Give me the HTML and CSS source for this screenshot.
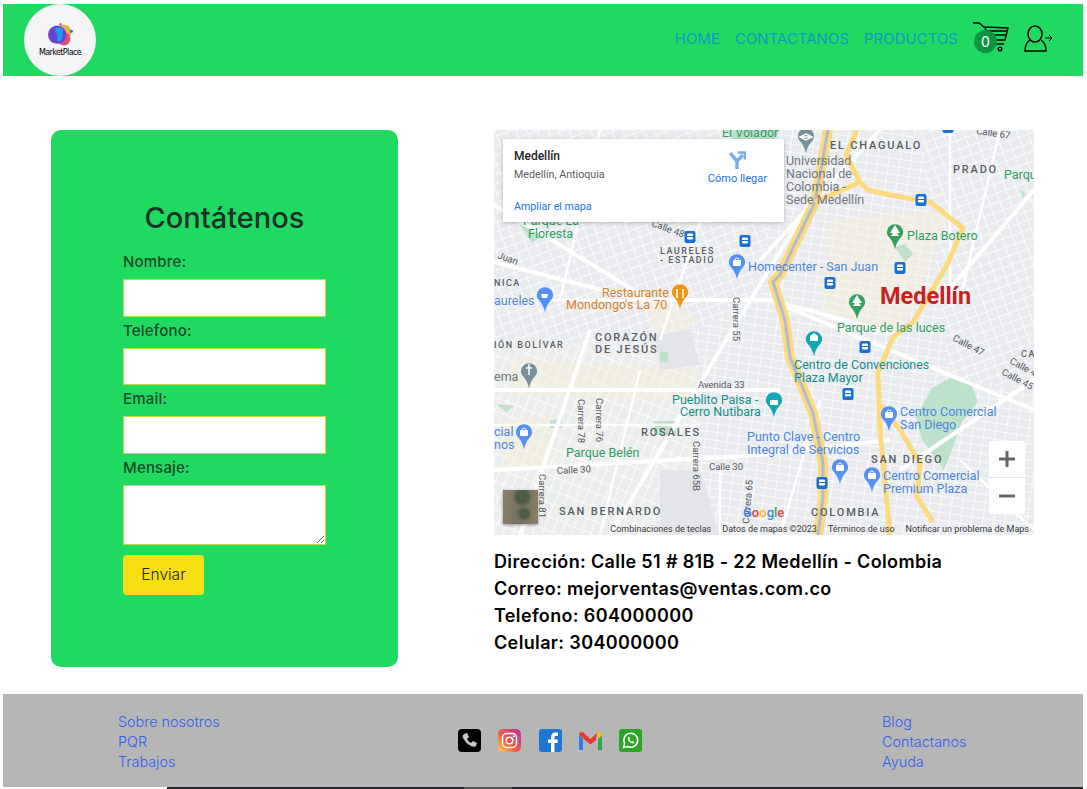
FILE: index.html
```html
<!DOCTYPE html>
<html lang="es">
<head>
	<meta charset="utf-8">
	<title>Contactenos</title>
	<link rel="stylesheet" href="styles.css">
</head>
<body>
	<header class="topbar">
		<a class="logo" href="#">
			<svg width="25" height="25" viewBox="0 0 30 30">
				<circle cx="19" cy="11" r="9" fill="#e8b14c"/>
				<circle cx="19" cy="19" r="8" fill="#d9527f"/>
				<circle cx="11" cy="14" r="11" fill="#6b3fd0"/>
				<path d="M9 6c3-2 5 0 6 0 1 0 3-1 3 3l-1 10c-1 3-3 4-5 3-2-1-1-6-1-9-2-1-3-5-2-7z" fill="#1b9be8"/>
				<circle cx="15" cy="1.500" r="1.500" fill="#d9527f"/>
				<circle cx="28" cy="10" r="1.800" fill="#3a6ea8"/>
			</svg>
			<span class="logo-text">MarketPlace</span>
		</a>
		<nav class="mainnav">
			<a href="#">HOME</a>
			<a href="#">CONTACTANOS</a>
			<a href="#">PRODUCTOS</a>
		</nav>
		<a class="cart" href="#">
			<svg width="37" height="31" viewBox="0 0 37 31" fill="none" stroke="#000" stroke-width="1.400">
				<path d="M0 1h6l5 4 24 1-3 12H15"/>
				<path d="M12 6l5 12M34 9H12M33 13H14"/>
				<path d="M17 22h14"/>
				<circle cx="27" cy="27" r="1.800"/>
			</svg>
			<span class="badge">0</span>
		</a>
		<a class="user" href="#">
			<svg width="30" height="28" viewBox="0 0 30 28" fill="none" stroke="#000" stroke-width="1.500">
				<ellipse cx="11" cy="9" rx="7" ry="8"/>
				<path d="M6 15c-3 2-5 5-5 11h21c0-6-2-9-5-11"/>
				<path d="M21 13h7M25 10l3 3-3 3" stroke-width="1"/>
			</svg>
		</a>
	</header>

	<main class="content">
		<section class="card">
			<h2>Contátenos</h2>
			<form class="form">
				<label for="nombre">Nombre:</label>
				<input id="nombre" type="text">
				<label for="telefono">Telefono:</label>
				<input id="telefono" type="text">
				<label for="email">Email:</label>
				<input id="email" type="text">
				<label for="mensaje">Mensaje:</label>
				<textarea id="mensaje"></textarea>
				<button type="button">Enviar</button>
			</form>
		</section>

		<section class="info">
			<div class="map">
				<svg class="map-canvas" width="540" height="405" viewBox="494 130 540 405">
					<defs>
						<pattern id="blocksA" width="11" height="8" patternUnits="userSpaceOnUse" patternTransform="rotate(8)">
							<rect width="11" height="8" fill="#e9ebee"/>
							<path d="M0 0h11M0 0v8" stroke="#fff" stroke-width="1.500"/>
						</pattern>
						<pattern id="blocksB" width="10" height="9" patternUnits="userSpaceOnUse" patternTransform="rotate(-20)">
							<rect width="10" height="9" fill="#e9ebee"/>
							<path d="M0 0h10M0 0v9" stroke="#fff" stroke-width="1.500"/>
						</pattern>
						<pattern id="blocksC" width="9" height="13" patternUnits="userSpaceOnUse" patternTransform="rotate(22)">
							<rect width="9" height="13" fill="#eceded"/>
							<path d="M0 0h9M0 0v13" stroke="#fff" stroke-width="1.500"/>
						</pattern>
						<g id="pin">
							<path d="M0 14C-3-1-11-2-11-9a11 11 0 0 1 22 0c0 7-8 8-11 23z" transform="scale(.74)"/>
						</g>
						<g id="metro">
							<rect x="-5.500" y="-6" width="11" height="12" rx="2" fill="#1a6fd4"/>
							<rect x="-3" y="-3.500" width="6" height="6" rx="1" fill="#fff"/>
							<path d="M-3 -.5h6" stroke="#1a6fd4"/>
						</g>
						<g id="bag">
							<rect x="-4" y="-9" width="8" height="6" rx="1" fill="#fff"/>
							<path d="M-2-9a2 2 0 0 1 4 0" stroke="#fff" fill="none"/>
						</g>
					</defs>

					<rect x="494" y="130" width="540" height="405" fill="url(#blocksA)"/>
					<polygon points="494,130 780,130 760,300 650,350 494,340" fill="url(#blocksB)"/>
					<polygon points="494,340 700,350 700,535 494,535" fill="url(#blocksC)"/>
					<polygon points="920,130 1034,130 1034,390 950,380" fill="url(#blocksB)"/>
					<polygon points="830,220 950,210 900,340 820,310" fill="#f7f0d4" opacity=".4"/>
					<polygon points="510,360 700,370 690,400 510,395" fill="#f7f0d4" opacity=".45"/>
					<polygon points="640,290 700,320 660,345" fill="#f7f0d4" opacity=".4"/>
					<polygon points="500,420 560,415 550,470 505,470" fill="#f7f0d4" opacity=".45"/>
					<polygon points="660,470 700,470 720,535 660,535" fill="#e3e5e8"/>
					<polygon points="655,335 690,330 700,365 660,370" fill="#e3e5e8"/>

					<path class="park" d="M932 388l18-10 22 8 6 16-16 20-8 22-10 26-22-30-6-24z"/>
					<path class="park" d="M654 421h22v14h-22zM496 404l18 2-8 6zM550 420h12v8h-12zM660 352h8v10h-8z"/>
					<path class="park" d="M520 225l24 10-12 8z"/>
					<path class="park" d="M725 130h55l-6 10h-40zM895 247l10-3 8 10-8 8zM1020 190l6 3-3 5z"/>

					<path class="street" d="M494 262L640 300 770 300 900 335M494 390H780M494 470L760 455 890 440M610 535L720 350 830 170M590 330L520 535M770 300L1034 410M880 130L760 260M940 300L1034 190M494 205L650 300M900 470L1034 380"/>
					<path class="street-thin" d="M494 300H770M494 425H700M600 130L560 300M700 222L660 340M640 370L600 535M950 130V300M1000 130L960 300M820 400L780 535M720 470V535M960 460L1034 530"/>

					<path class="river" d="M828 130L815 202 780 275 773 282 785 320 790 357 813 413 823 463 823 497 818 535"/>
					<path class="highway" d="M828 130L815 202 780 275 773 282 785 320 790 357 813 413 823 463 823 497 818 535"/>
					<path class="highway-in" d="M857 130L846 155 860 182 868 190 890 195 930 202 963 228 947 265 913 322 893 337 878 373 880 430 890 535"/>
					<path class="highway-in" d="M880 405L900 430 920 463 917 497 933 522"/>
					<path class="highway-in" d="M815 202L860 182"/>

					<text class="t-green" x="722" y="137">El Volador</text>
					<text class="t-green" x="523" y="225">Parque La</text>
					<text class="t-green" x="528" y="238">Floresta</text>
					<text class="t-street" transform="translate(651 226) rotate(20)">Calle 48</text>
					<text class="t-street" transform="translate(497 258) rotate(20)">Juan</text>
					<text class="t-area-s" x="660" y="254">LAURELES</text>
					<text class="t-area-s" x="660" y="263">- ESTADIO</text>
					<text class="t-area-s" x="494" y="286">NICA</text>
					<text class="t-blue" x="494" y="305">aureles</text>
					<text class="t-orange" x="602" y="297">Restaurante</text>
					<text class="t-orange" x="566" y="309">Mondongo's La 70</text>
					<text class="t-street" transform="translate(733 297) rotate(90)">Carrera 55</text>
					<text class="t-blue" x="748" y="271">Homecenter - San Juan</text>
					<text class="t-area" x="830" y="149">EL CHAGUALO</text>
					<text class="t-grey" x="786" y="165">Universidad</text>
					<text class="t-grey" x="786" y="178">Nacional de</text>
					<text class="t-grey" x="786" y="191">Colombia -</text>
					<text class="t-grey" x="786" y="204">Sede Medellín</text>
					<text class="t-area" x="953" y="173">PRADO</text>
					<text class="t-green" x="1004" y="179">Parque</text>
					<text class="t-street" transform="translate(976 134) rotate(8)">Calle 67</text>
					<text class="t-green" x="907" y="240">Plaza Botero</text>
					<text class="t-city" x="880" y="304">Medellín</text>
					<text class="t-green" x="837" y="332">Parque de las luces</text>
					<text class="t-area" x="595" y="341">CORAZÓN</text>
					<text class="t-area" x="595" y="353">DE JESÚS</text>
					<text class="t-area-s" x="494" y="348">IÓN BOLÍVAR</text>
					<text class="t-grey" x="494" y="381">ema</text>
					<text class="t-street" x="698" y="388">Avenida 33</text>
					<text class="t-teal" x="672" y="404">Pueblito Paisa -</text>
					<text class="t-teal" x="680" y="416">Cerro Nutibara</text>
					<text class="t-street" transform="translate(578 399) rotate(90)">Carrera 78</text>
					<text class="t-street" transform="translate(596 398) rotate(90)">Carrera 76</text>
					<text class="t-blue" x="494" y="436">cial</text>
					<text class="t-blue" x="494" y="449">nos</text>
					<text class="t-green" x="566" y="457">Parque Belén</text>
					<text class="t-area" x="641" y="436">ROSALES</text>
					<text class="t-street" transform="translate(693 441) rotate(90)">Carrera 65B</text>
					<text class="t-street" x="709" y="470">Calle 30</text>
					<text class="t-street" transform="translate(557 474) rotate(-3)">Calle 30</text>
					<text class="t-street" transform="translate(539 474) rotate(90)">Carrera 81</text>
					<text class="t-area" x="559" y="515">SAN BERNARDO</text>
					<text class="t-street" transform="translate(749 524) rotate(-85)">Carrera 65</text>
					<text class="t-blue" x="747" y="441">Punto Clave - Centro</text>
					<text class="t-blue" x="747" y="454">Integral de Servicios</text>
					<text class="t-teal" x="794" y="369">Centro de Convenciones</text>
					<text class="t-teal" x="794" y="382">Plaza Mayor</text>
					<text class="t-street" transform="translate(952 340) rotate(28)">Calle 47</text>
					<text class="t-street" transform="translate(1009 363) rotate(28)">Calle 4</text>
					<text class="t-street" transform="translate(1001 374) rotate(28)">Calle 45</text>
					<text class="t-area-s" x="1021" y="357">CA</text>
					<text class="t-blue" x="900" y="416">Centro Comercial</text>
					<text class="t-blue" x="900" y="429">San Diego</text>
					<text class="t-area" x="871" y="463">SAN DIEGO</text>
					<text class="t-blue" x="883" y="480">Centro Comercial</text>
					<text class="t-blue" x="883" y="493">Premium Plaza</text>
					<text class="t-area" x="811" y="516">COLOMBIA</text>
					<text class="t-google" x="743" y="517"><tspan fill="#4285f4">G</tspan><tspan fill="#ea4335">o</tspan><tspan fill="#fbbc05">o</tspan><tspan fill="#4285f4">g</tspan><tspan fill="#34a853">l</tspan><tspan fill="#ea4335">e</tspan></text>

					<use href="#pin" x="806" y="143" fill="#78909c"/>
					<use href="#pin" x="529" y="378" fill="#78909c"/>
					<use href="#pin" x="545" y="302" fill="#5491f5"/>
					<use href="#pin" x="680" y="299" fill="#ef9714"/>
					<use href="#pin" x="737" y="269" fill="#5491f5"/>
					<use href="#pin" x="895" y="239" fill="#34a05c"/>
					<use href="#pin" x="857" y="309" fill="#34a05c"/>
					<use href="#pin" x="814" y="346" fill="#12a5b4"/>
					<use href="#pin" x="774" y="407" fill="#12a5b4"/>
					<use href="#pin" x="524" y="439" fill="#5491f5"/>
					<use href="#pin" x="889" y="421" fill="#5491f5"/>
					<use href="#pin" x="840" y="474" fill="#5491f5"/>
					<use href="#pin" x="872" y="482" fill="#5491f5"/>
					<use href="#bag" x="737" y="269"/>
					<use href="#bag" x="524" y="439"/>
					<use href="#bag" x="889" y="421"/>
					<use href="#bag" x="840" y="474"/>
					<use href="#bag" x="872" y="482"/>
					<path d="M541 294h7l-1 4h-5zM890 233l5-8 5 8h-3l2 3h-8l2-3zM852 303l5-8 5 8h-3l2 3h-8l2-3z" fill="#fff"/>
					<path d="M677 289v9M683 289v9M526 368h6M529 364v11M801 137h10M806 134l6 3-6 3-6-3z" stroke="#fff" stroke-width="1.500" fill="none"/>
					<path d="M770 400h8v5h-8zM810 336l4-3 4 3v5h-8z" fill="#fff"/>

					<use href="#metro" x="690" y="237"/>
					<use href="#metro" x="745" y="241"/>
					<use href="#metro" x="921" y="200"/>
					<use href="#metro" x="900" y="268"/>
					<use href="#metro" x="830" y="283"/>
					<use href="#metro" x="865" y="347"/>
					<use href="#metro" x="848" y="394"/>
					<use href="#metro" x="822" y="483"/>
					<use href="#metro" x="948" y="127"/>
				</svg>

				<div class="place-card">
					<div class="place-text">
						<strong>Medellín</strong>
						<span>Medellín, Antioquia</span>
						<a href="#">Ampliar el mapa</a>
					</div>
					<a class="directions" href="#">
						<svg width="18" height="18" viewBox="0 0 18 18" fill="none" stroke="#7baee8" stroke-width="3.500">
							<path d="M9 18V10L2 2M9 10l6-6"/>
							<path d="M10 1.500h7v7" stroke-width="2.500"/>
						</svg>
						Cómo llegar
					</a>
				</div>

				<div class="satellite"></div>

				<div class="zoom-ctl">
					<span class="zoom-btn">
						<svg width="16" height="16" viewBox="0 0 16 16"><path d="M8 0v16M0 8h16" stroke="#666" stroke-width="3"/></svg>
					</span>
					<span class="zoom-btn">
						<svg width="16" height="16" viewBox="0 0 16 16"><path d="M0 8h16" stroke="#666" stroke-width="3"/></svg>
					</span>
				</div>

				<div class="attrib">
					<span>Combinaciones de teclas</span>
					<span>Datos de mapas ©2023</span>
					<span>Términos de uso</span>
					<span>Notificar un problema de Maps</span>
				</div>
			</div>

			<p class="address">Dirección: Calle 51 # 81B - 22 Medellín - Colombia<br>Correo: mejorventas@ventas.com.co<br>Telefono: 604000000<br>Celular: 304000000</p>
		</section>
	</main>

	<footer class="footer">
		<ul class="footer-links">
			<li><a href="#">Sobre nosotros</a></li>
			<li><a href="#">PQR</a></li>
			<li><a href="#">Trabajos</a></li>
		</ul>
		<div class="social">
			<svg width="23" height="23" viewBox="0 0 23 23">
				<rect width="23" height="23" rx="4" fill="#000"/>
				<path d="M6 5l3-1 2 4-2 2c1 2 2 3 4 4l2-2 4 2-1 3c-1 1-3 1-5 0-4-2-6-5-8-8-1-2 0-3 1-4z" fill="#c9c9c9"/>
			</svg>
			<svg width="23" height="23" viewBox="0 0 23 23">
				<defs>
					<linearGradient id="insta" x1="0" y1="1" x2="1" y2="0">
						<stop offset="0" stop-color="#fcd95a"/>
						<stop offset=".4" stop-color="#f56040"/>
						<stop offset="1" stop-color="#b92fa8"/>
					</linearGradient>
				</defs>
				<rect width="23" height="23" rx="5" fill="url(#insta)"/>
				<rect x="4.500" y="4.500" width="14" height="14" rx="4" fill="none" stroke="#fff" stroke-width="1.500"/>
				<circle cx="11.500" cy="11.500" r="3.300" fill="none" stroke="#fff" stroke-width="1.500"/>
				<circle cx="15.800" cy="7.200" r="1" fill="#fff"/>
			</svg>
			<svg width="23" height="23" viewBox="0 0 23 23">
				<rect width="23" height="23" rx="3" fill="#1f76d2"/>
				<path d="M12 23v-9H9v-3.500h3V8c0-3 2-4.500 4-4.500h3V7h-2c-1 0-1.500.5-1.500 1.500v2h3.500l-.5 3.500h-3v9z" fill="#fff"/>
			</svg>
			<svg width="23" height="23" viewBox="0 0 23 23">
				<path d="M0 6v15h4V10z" fill="#2a7ee8"/>
				<path d="M19 10v11h4V6z" fill="#2fa84f"/>
				<path d="M0 6c0-3 3-4 5-2l6.500 6 6.500-6-1 7-5.500 4.500L0 6z" fill="#e8392e"/>
				<path d="M18 4c2-2 5-1 5 2l-4 4z" fill="#f6bf1e"/>
			</svg>
			<svg width="23" height="23" viewBox="0 0 23 23">
				<rect width="23" height="23" rx="3" fill="#2aa526"/>
				<path d="M4.500 18.500l1-4a7 7 0 1 1 3 3z" fill="none" stroke="#fff" stroke-width="1.500"/>
				<path d="M9 8l1-.5 1 2-.7 1c.5 1 1.200 1.700 2.200 2.200l1-.7 2 1-.5 1c-1 .7-2.500.5-4-.7-1.500-1.200-2.500-3-2-5z" fill="#fff"/>
			</svg>
		</div>
		<ul class="footer-links right">
			<li><a href="#">Blog</a></li>
			<li><a href="#">Contactanos</a></li>
			<li><a href="#">Ayuda</a></li>
		</ul>
	</footer>
	<div class="strip"></div>
</body>
</html>
```

FILE: styles.css
```css
html, body {
	height: 789px;
	overflow: hidden;
}
body {
	margin: 0;
	padding: 4px 4px 0 3px;
	box-sizing: border-box;
	background: #fff;
	color: #000;
	font-family: Inter, "Open Sans", sans-serif;
}
a {
	text-decoration: none;
}

.topbar {
	display: flex;
	align-items: center;
	height: 72px;
	padding-left: 21px;
	background: #20d961;
}
.logo {
	display: flex;
	flex-direction: column;
	align-items: center;
	justify-content: center;
	width: 72px;
	height: 72px;
	border-radius: 50%;
	background: #f5f5f7;
}
.logo svg {
	margin-bottom: -1px;
}
.logo-text {
	font-family: "DejaVu Sans", sans-serif;
	font-size: 8px;
	letter-spacing: -0.6px;
	line-height: 11px;
	color: #000;
}
.mainnav {
	display: flex;
	gap: 15px;
	margin: -4px 0 0 auto;
}
.mainnav a {
	font-size: 15px;
	font-weight: 400;
	color: #1098c6;
}
.cart {
	position: relative;
	display: block;
	width: 37px;
	height: 31px;
	margin: -6px 0 0 15px;
}
.cart .badge {
	position: absolute;
	left: 1px;
	top: 8px;
	width: 23px;
	height: 23px;
	border-radius: 50%;
	background: #0f9344;
	color: #fff;
	font-size: 14px;
	line-height: 24px;
	text-align: center;
}
.user {
	display: block;
	height: 28px;
	margin: -3px 29px 0 14px;
}

.content {
	display: flex;
	align-items: flex-start;
	gap: 96px;
	height: 618px;
	padding: 54px 0 0 48px;
	box-sizing: border-box;
}
.card {
	width: 347px;
	height: 537px;
	box-sizing: border-box;
	padding-top: 71px;
	border-radius: 10px;
	background: #20d961;
}
.card h2 {
	margin: 0 0 16px;
	font-size: 29px;
	font-weight: 500;
	line-height: 33px;
	text-align: center;
	color: #1d312a;
}
.form {
	display: flex;
	flex-direction: column;
	align-items: flex-start;
	width: 203px;
	margin-left: 72px;
}
.form label {
	margin-bottom: 5px;
	font-size: 15px;
	font-weight: 500;
	letter-spacing: .2px;
	line-height: 24px;
	color: #0f4a2a;
}
.form input, .form textarea {
	display: block;
	width: 100%;
	box-sizing: border-box;
	margin: 0 0 2px;
	border: 1px solid #b9e23a;
	border-radius: 0;
	background: #fff;
}
.form input {
	height: 37.670px;
}
.form textarea {
	height: 60px;
}
.form button {
	width: 81px;
	height: 40px;
	margin-top: 8px;
	border: 0;
	border-radius: 4px;
	background: #f5de12;
	color: #222;
	font-family: inherit;
	font-size: 15.500px;
	font-weight: 300;
}

.info {
	width: 540px;
}
.map {
	position: relative;
	width: 540px;
	height: 405px;
	overflow: hidden;
}
.map-canvas {
	display: block;
	font-family: Roboto, sans-serif;
}
.park {
	fill: #bde2cb;
}
.street {
	fill: none;
	stroke: #fff;
	stroke-width: 4;
}
.street-thin {
	fill: none;
	stroke: #fff;
	stroke-width: 2.500;
}
.river {
	fill: none;
	stroke: #fdd97f;
	stroke-width: 10;
}
.highway {
	fill: none;
	stroke: #b4bccb;
	stroke-width: 3;
}
.highway-in {
	fill: none;
	stroke: #fdd97f;
	stroke-width: 5;
}
.t-green {
	font-size: 12.500px;
	fill: #2f9e63;
}
.t-blue {
	font-size: 12.500px;
	fill: #4a86e0;
}
.t-orange {
	font-size: 12.500px;
	fill: #d9822b;
}
.t-teal {
	font-size: 12.500px;
	fill: #13908c;
}
.t-grey {
	font-size: 12.500px;
	fill: #70777f;
}
.t-street {
	font-size: 9.500px;
	fill: #55595e;
}
.t-area {
	font-size: 11px;
	font-weight: 500;
	letter-spacing: 1.800px;
	fill: #5a5e63;
}
.t-area-s {
	font-size: 9px;
	font-weight: 500;
	letter-spacing: 1.500px;
	fill: #5a5e63;
}
.t-city {
	font-size: 23.500px;
	font-weight: 700;
	fill: #c5221f;
}
.t-google {
	font-size: 13px;
	font-weight: 500;
}

.place-card {
	position: absolute;
	left: 9px;
	top: 9px;
	display: flex;
	justify-content: space-between;
	width: 281px;
	height: 83px;
	box-sizing: border-box;
	padding: 10px 17px 0 11px;
	background: #fff;
	box-shadow: 0 1px 4px rgba(0, 0, 0, .25);
	font-family: Roboto, sans-serif;
}
.place-text {
	display: flex;
	flex-direction: column;
}
.place-text strong {
	font-size: 12px;
	font-weight: 500;
	line-height: 14px;
	color: #222;
}
.place-text span {
	margin-top: 5px;
	font-size: 10.700px;
	line-height: 14px;
	color: #5b5b5b;
}
.place-text a {
	margin-top: 18px;
	font-size: 10.700px;
	line-height: 14px;
	color: #1a73e8;
}
.directions {
	display: flex;
	flex-direction: column;
	align-items: center;
	gap: 3px;
	padding-top: 2px;
	font-size: 11px;
	line-height: 14px;
	color: #1a73e8;
}
.satellite {
	position: absolute;
	left: 9px;
	top: 360px;
	width: 35px;
	height: 34px;
	background: radial-gradient(circle at 55% 20%, #4f5b42 0 18%, transparent 30%), radial-gradient(circle at 60% 70%, #4f5b42 0 12%, transparent 25%), linear-gradient(100deg, #8a7f6c, #77705f 50%, #8a8070);
	box-shadow: 0 1px 3px rgba(0, 0, 0, .4);
}
.zoom-ctl {
	position: absolute;
	left: 495px;
	top: 311px;
	display: flex;
	flex-direction: column;
	width: 36px;
	border-radius: 2px;
	background: #fff;
}
.zoom-btn {
	display: flex;
	align-items: center;
	justify-content: center;
	height: 36px;
}
.zoom-btn + .zoom-btn {
	border-top: 1px solid #e6e6e6;
}
.attrib {
	position: absolute;
	right: 5px;
	bottom: 0;
	display: flex;
	gap: 11px;
	font-family: Roboto, sans-serif;
	font-size: 9px;
	line-height: 12px;
	color: #3c3c3c;
}
.address {
	margin: 13px 0 0;
	font-size: 18px;
	font-weight: 600;
	letter-spacing: .36px;
	line-height: 27px;
}

.footer {
	display: grid;
	grid-template-columns: 340px 184px 1fr;
	align-items: center;
	height: 93px;
	box-sizing: border-box;
	padding: 3px 0 0 115px;
	background: #b6b6b6;
}
.footer-links {
	margin: 0;
	padding: 0;
	list-style: none;
	font-size: 14.400px;
	line-height: 20px;
}
.footer-links a {
	font-weight: 300;
	color: #2f62f0;
}
.footer-links.right {
	padding-left: 240px;
}
.social {
	display: flex;
	justify-content: space-between;
	margin-top: -3px;
}
.strip {
	height: 2px;
	margin: 0 0 0 164px;
	background: linear-gradient(90deg, #26282b 0 297px, #555 297px 345px, #26282b 345px);
}
```
